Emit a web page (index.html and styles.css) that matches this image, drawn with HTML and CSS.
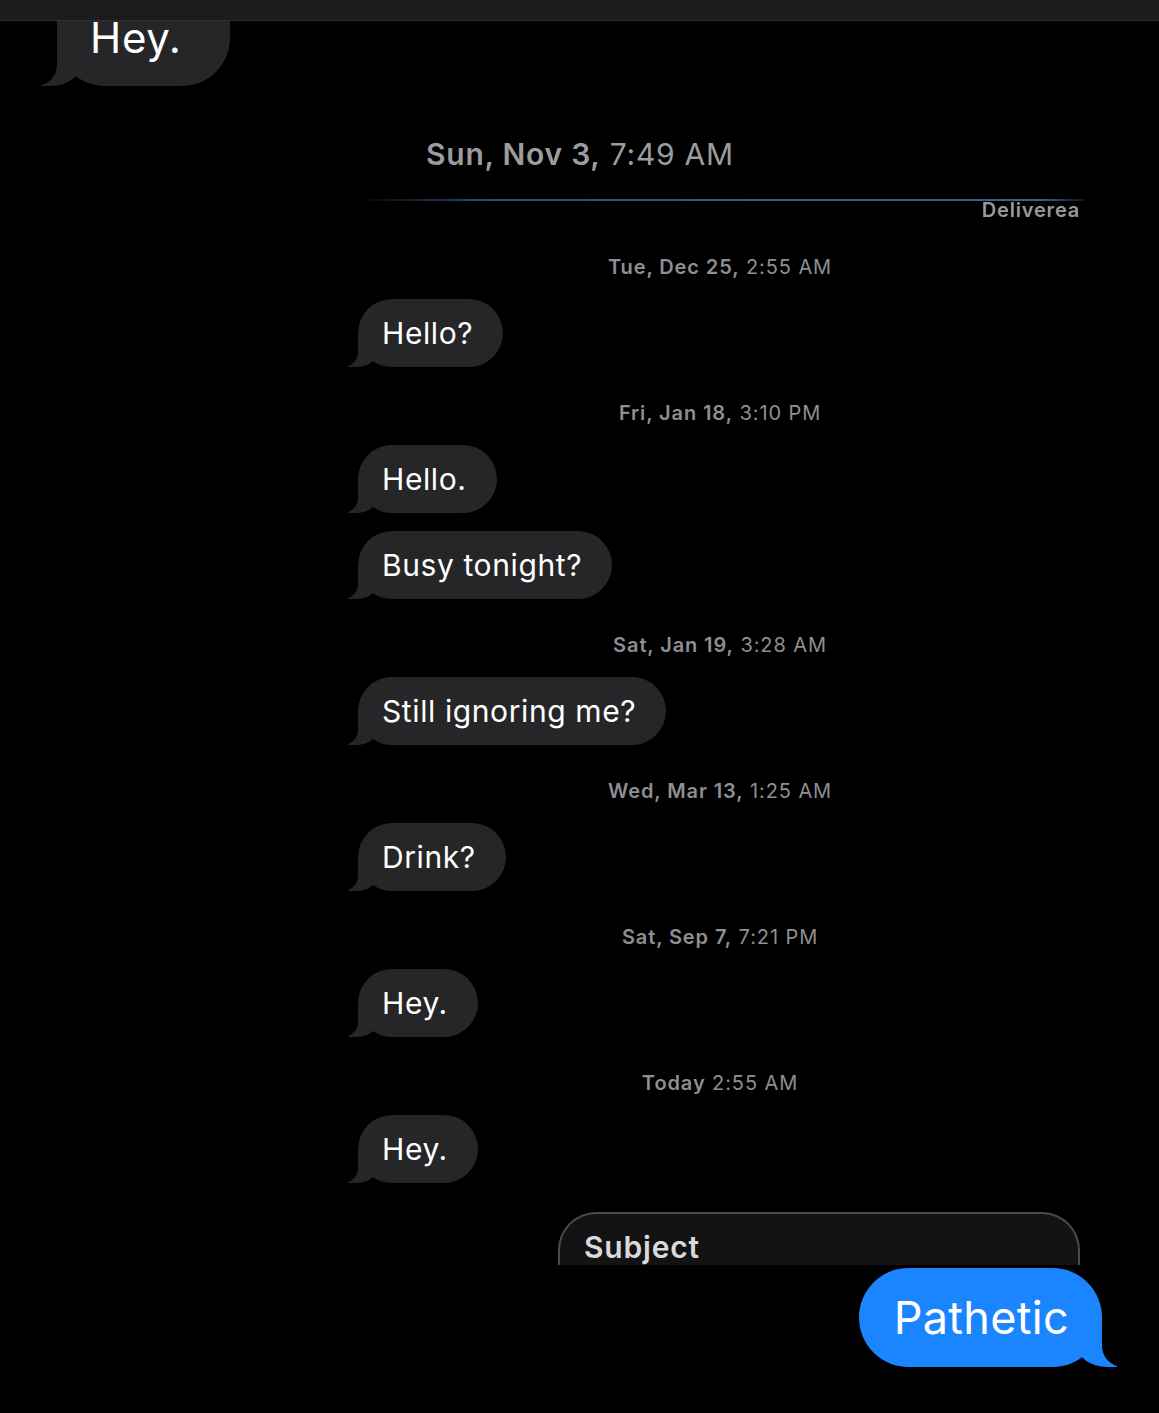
FILE: index.html
```html
<!DOCTYPE html>
<html lang="en">
<head>
  <meta charset="UTF-8">
  <meta name="viewport" content="width=device-width, initial-scale=1.0">
  <link rel="stylesheet" href="styles.css">
</head>
<body>
<div class="topbar"></div>

<div class="old-thread">
  <div class="bubble bubble-big">Hey.</div>
</div>

<div class="day-header"><b>Sun, Nov 3,</b> 7:49 AM</div>
<div class="divider"></div>
<div class="delivered">Deliverea</div>

<main class="thread">
  <p class="stamp first"><b>Tue, Dec 25,</b> 2:55 AM</p>
  <div class="bubble">Hello?</div>

  <p class="stamp"><b>Fri, Jan 18,</b> 3:10 PM</p>
  <div class="bubble">Hello.</div>
  <div class="bubble">Busy tonight?</div>

  <p class="stamp"><b>Sat, Jan 19,</b> 3:28 AM</p>
  <div class="bubble">Still ignoring me?</div>

  <p class="stamp"><b>Wed, Mar 13,</b> 1:25 AM</p>
  <div class="bubble">Drink?</div>

  <p class="stamp"><b>Sat, Sep 7,</b> 7:21 PM</p>
  <div class="bubble">Hey.</div>

  <p class="stamp"><b>Today</b> 2:55 AM</p>
  <div class="bubble">Hey.</div>

  <div class="subject">Subject</div>
</main>

<div class="sent-row">
  <div class="bubble sent">Pathetic</div>
</div>
</body>
</html>
```

FILE: styles.css
```css
body {
  margin: 0;
  background-color: #000;
  color: #fff;
  font-family: Inter, "Noto Sans", sans-serif;
  min-height: 100vh;
}

.topbar {
  height: 20px;
  background-color: #1c1c1e;
  border-bottom: 1px solid #2e2e30;
}

/* bottom of an older thread, its top hidden under the bar */
.old-thread {
  display: flex;
  padding-left: 57px;
}

.day-header {
  margin: 50px 0 0 426px;
  font-size: 30px;
  line-height: 36px;
  letter-spacing: 0.75px;
  color: #9c9c9f;
}

.day-header b {
  font-weight: 600;
}

.divider {
  margin: 27px 0 0 355px;
  width: 730px;
  height: 2px;
  background: linear-gradient(90deg, rgba(58, 90, 130, 0) 0%, #2f4a6c 18%, #3b5c85 60%, #3d5f88 94%, rgba(61, 95, 136, 0.2) 100%);
}

.delivered {
  width: 1080px;
  margin-top: -1px;
  text-align: right;
  font-size: 20px;
  font-weight: 600;
  line-height: 20px;
  letter-spacing: 0.8px;
  color: #9a9a9e;
}

.thread {
  margin-left: 358px;
  width: 724px;
  display: flex;
  flex-direction: column;
  align-items: flex-start;
}

.stamp {
  align-self: stretch;
  margin: 34px 0 20px;
  text-align: center;
  font-size: 20px;
  line-height: 24px;
  letter-spacing: 0.9px;
  color: #8e8e93;
}

.stamp.first {
  margin-top: 35px;
}

.stamp b {
  font-weight: 600;
}

.bubble {
  position: relative;
  background-color: #262629;
  font-size: 30px;
  line-height: 36px;
  letter-spacing: 0.6px;
  padding: 16px 30px 16px 24px;
  border-radius: 34px;
}

.bubble + .bubble {
  margin-top: 18px;
}

.bubble::before,
.bubble::after {
  content: "";
  position: absolute;
  bottom: 0;
  height: 34px;
}

.bubble::before {
  left: -10px;
  width: 30px;
  background: inherit;
  border-bottom-right-radius: 22px 16px;
}

.bubble::after {
  left: -30px;
  width: 30px;
  background-color: #000;
  border-bottom-right-radius: 15px;
}

.bubble-big {
  font-size: 42px;
  line-height: 34px;
  letter-spacing: 0.7px;
  padding: 0 48px 31px 33px;
  border-radius: 0 0 48px 48px;
}

.bubble-big::before {
  left: -16px;
  width: 40px;
  height: 48px;
  border-bottom-right-radius: 30px 22px;
}

.bubble-big::after {
  left: -40px;
  width: 40px;
  height: 48px;
  border-bottom-right-radius: 21px;
}

.subject {
  align-self: flex-end;
  margin: 29px 2px 0 0;
  width: 522px;
  height: 53px;
  box-sizing: border-box;
  overflow: hidden;
  padding: 15px 0 0 24px;
  background-color: #131313;
  border: 2px solid #4b4b4e;
  border-bottom: none;
  border-radius: 38px 38px 0 0;
  font-size: 30px;
  font-weight: 600;
  line-height: 36px;
  letter-spacing: 0.8px;
  color: #d9d9dc;
}

.sent-row {
  display: flex;
  justify-content: flex-end;
  padding-right: 57px;
  margin-top: 3px;
}

.sent {
  background-color: #1b84ff;
  font-size: 45px;
  line-height: 99px;
  letter-spacing: 0.3px;
  padding: 0 33px 0 35px;
  border-radius: 50px;
}

.sent::before {
  left: auto;
  right: -15px;
  width: 40px;
  height: 50px;
  border-bottom-right-radius: 0;
  border-bottom-left-radius: 30px 22px;
}

.sent::after {
  left: auto;
  right: -40px;
  width: 40px;
  height: 50px;
  border-bottom-right-radius: 0;
  border-bottom-left-radius: 21px;
}
```
